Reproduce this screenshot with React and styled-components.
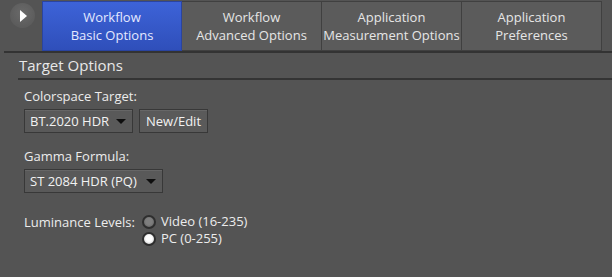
import React from "react";
import styled, { createGlobalStyle } from "styled-components";

const GlobalStyle = createGlobalStyle`
  html, body {
    margin: 0;
    padding: 0;
    background: #545454;
  }
  body {
    font-family: "Open Sans", "Noto Sans", sans-serif;
    color: #ececec;
  }
`;

const Page = styled.div`
  width: 612px;
  height: 277px;
  background: #545454;
  overflow: hidden;
`;

const TopBar = styled.div`
  display: flex;
  align-items: flex-start;
  height: 51px;
  margin-left: 4px;
  border-bottom: 2px solid #333333;
`;

const NavButton = styled.button`
  width: 25px;
  height: 25px;
  margin: 3px 7px 0 6px;
  padding: 0;
  border: none;
  border-radius: 50%;
  background: radial-gradient(circle at 50% 40%, #6a6a6a, #5c5c5c 70%);
  display: flex;
  align-items: center;
  justify-content: center;
  cursor: pointer;
`;

const Tabs = styled.div`
  display: flex;
  height: 51px;
  padding-top: 1px;
  box-sizing: border-box;
`;

const Tab = styled.div`
  width: 140px;
  height: 50px;
  box-sizing: border-box;
  display: flex;
  flex-direction: column;
  align-items: center;
  justify-content: center;
  font-size: 13px;
  line-height: 18px;
  white-space: nowrap;
  color: ${({ $active }) => ($active ? "#e4e9ff" : "#e6e6e6")};
  background: ${({ $active }) =>
    $active ? "linear-gradient(#3d63d8, #2f4fba)" : "#5b5b5b"};
  border: 1px solid ${({ $active }) => ($active ? "#2a44a0" : "#404040")};
  border-left-width: ${({ $first }) => ($first ? "1px" : "0")};
`;

const SectionHeader = styled.div`
  margin-left: 18px;
  padding: 1px 0 0 1px;
  height: 24px;
  font-size: 15px;
  line-height: 22px;
  color: #e8e8e8;
  border-bottom: 2px solid #343434;
`;

const Content = styled.div`
  padding: 7px 0 0 24px;
`;

const Field = styled.div`
  margin-bottom: 14px;
`;

const Label = styled.div`
  font-size: 13px;
  line-height: 18px;
  color: #ececec;
  margin-bottom: 4px;
`;

const Row = styled.div`
  display: flex;
  gap: 6px;
`;

const Select = styled.div`
  width: ${({ $width }) => $width}px;
  height: 24px;
  box-sizing: border-box;
  display: flex;
  align-items: center;
  justify-content: space-between;
  padding: 0 6px 0 5px;
  font-size: 13px;
  color: #f2f2f2;
  background: #595959;
  border: 1px solid #383838;
  box-shadow: inset 0 1px 0 #666666;
`;

const Caret = styled.span`
  width: 0;
  height: 0;
  border-left: 5px solid transparent;
  border-right: 5px solid transparent;
  border-top: 5px solid #0e0e0e;
`;

const Button = styled.button`
  height: 24px;
  padding: 0 6px;
  font-family: inherit;
  font-size: 13px;
  color: #f2f2f2;
  background: #5a5a5a;
  border: 1px solid #383838;
  box-shadow: inset 0 1px 0 #676767;
  cursor: pointer;
`;

const RadioGroupRow = styled.div`
  display: flex;
  align-items: flex-start;
  margin-top: 20px;
`;

const RadioLabel = styled.div`
  font-size: 13px;
  line-height: 17px;
  margin-top: 1px;
  margin-right: 7px;
`;

const RadioList = styled.div`
  display: flex;
  flex-direction: column;
`;

const RadioItem = styled.label`
  display: flex;
  align-items: center;
  gap: 5px;
  font-size: 13px;
  line-height: 17px;
`;

const RadioDot = styled.span`
  width: 14px;
  height: 14px;
  box-sizing: border-box;
  border-radius: 50%;
  border: 2px solid #2e2e2e;
  background: ${({ $on }) =>
    $on
      ? "radial-gradient(circle at 50% 45%, #ffffff 40%, #d8d8d8 75%)"
      : "radial-gradient(circle at 50% 45%, #7e7e7e 40%, #6c6c6c 75%)"};
`;

const tabs = [
  ["Workflow", "Basic Options"],
  ["Workflow", "Advanced Options"],
  ["Application", "Measurement Options"],
  ["Application", "Preferences"],
];

export default function App() {
  return (
    <Page>
      <GlobalStyle />
      <TopBar>
        <NavButton>
          <svg width="8" height="12" viewBox="0 0 8 12">
            <path d="M1 0 L8 6 L1 12 Z" fill="#ffffff" />
          </svg>
        </NavButton>
        <Tabs>
          {tabs.map(([a, b], i) => (
            <Tab key={b} $active={i === 0} $first={i === 0}>
              <span>{a}</span>
              <span>{b}</span>
            </Tab>
          ))}
        </Tabs>
      </TopBar>
      <SectionHeader>Target Options</SectionHeader>
      <Content>
        <Field>
          <Label>Colorspace Target:</Label>
          <Row>
            <Select $width={109}>
              BT.2020 HDR <Caret />
            </Select>
            <Button>New/Edit</Button>
          </Row>
        </Field>
        <Field>
          <Label>Gamma Formula:</Label>
          <Select $width={139}>
            ST 2084 HDR (PQ) <Caret />
          </Select>
        </Field>
        <RadioGroupRow>
          <RadioLabel>Luminance Levels:</RadioLabel>
          <RadioList>
            <RadioItem>
              <RadioDot />
              Video (16-235)
            </RadioItem>
            <RadioItem>
              <RadioDot $on />
              PC (0-255)
            </RadioItem>
          </RadioList>
        </RadioGroupRow>
      </Content>
    </Page>
  );
}
